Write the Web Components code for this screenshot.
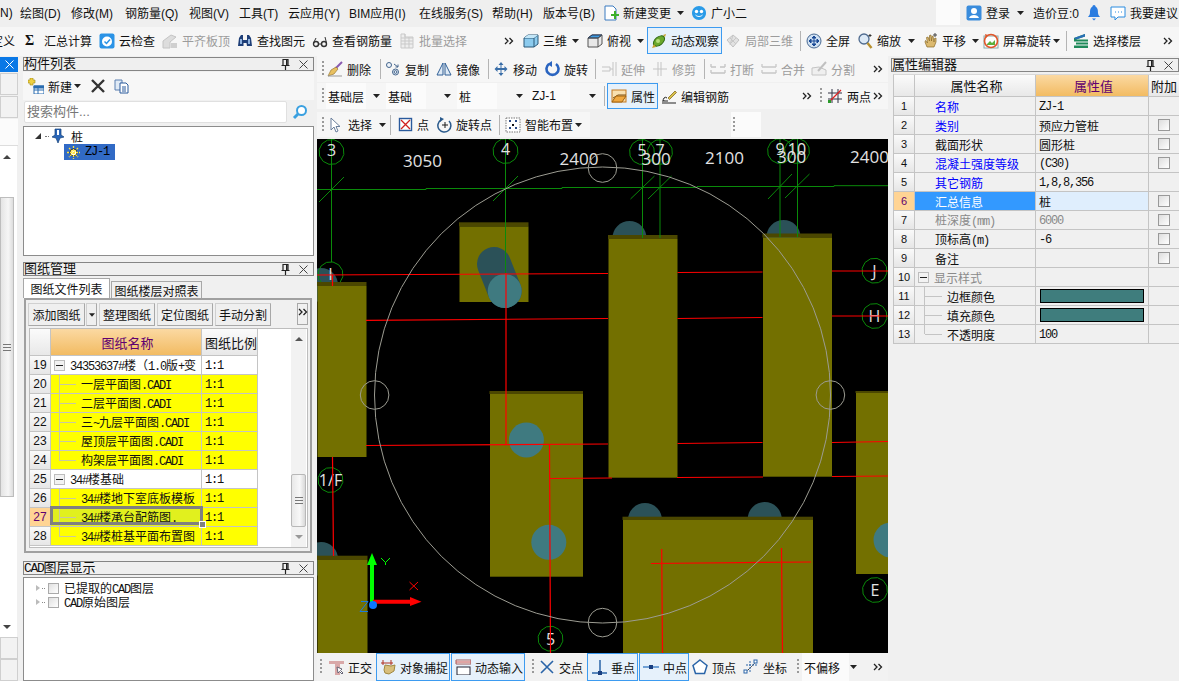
<!DOCTYPE html>
<html lang="zh"><head><meta charset="utf-8"><title>GTJ</title>
<style>
html,body{margin:0;padding:0;background:#f0f0f0;overflow:hidden}
body{font:12px "Liberation Sans","Noto Sans CJK SC",sans-serif;color:#111}
</style></head><body>
<gp-app>
  <menu-bar></menu-bar>
  <main-tools></main-tools>
  <side-strip></side-strip>
  <div id="left" slot="left">
    <dock-panel name="构件列表" style="height:199px"><component-list></component-list></dock-panel>
    <dock-panel name="图纸管理" style="height:290px;margin-top:6px"><drawing-manager></drawing-manager></dock-panel>
    <dock-panel name="CAD图层显示" style="height:120px;margin-top:9px"><cad-layers></cad-layers></dock-panel>
  </div>
  <center-col slot="center"></center-col>
  <dock-panel slot="right" name="属性编辑器" style="height:623px"><prop-editor></prop-editor></dock-panel>
</gp-app>
<script>
const I={
caret:[7,4,'<path d="M0 0h7L3.5 4z" fill="#222"/>'],
sep:[1,20,'<rect width="1" height="20" fill="#b4b4b4"/>'],
grip:[2,16,'<path d="M1 0v16" stroke="#9a9a9a" stroke-width="2" stroke-dasharray="2 2"/>'],
more:[10,8,'<path d="M1 1l3 3-3 3M5.5 1l3 3-3 3" fill="none" stroke="#222" stroke-width="1.3"/>'],
cloud:'<rect x=".5" y=".5" width="15" height="15" rx="2" fill="#2b93e6"/><circle cx="8" cy="8.5" r="5" fill="#fff"/><path d="M5.5 8.5l2 2 3.5-4" stroke="#2b93e6" stroke-width="1.5" fill="none"/>',
align:'<path d="M1 15V8l8-6 5 2-6 5v6z" fill="#ddd" stroke="#c4c4c4"/><path d="M9 10h6v5H9z" fill="#cfcfcf"/>',
find:'<path d="M2 5l2-3h2v5h4V2h2l2 3 1 8h-5l-.5-3h-3L6.500 13H1z" fill="#1f3f78"/><path d="M3 6h2v5H3zM11 6h2v5h-2z" fill="#8fb3e0"/>',
glasses:'<circle cx="4" cy="11" r="2.500" fill="none" stroke="#333" stroke-width="1.400"/><circle cx="12" cy="11" r="2.500" fill="none" stroke="#333" stroke-width="1.400"/><path d="M6.500 11h3M1.500 10L4 5M14.500 10L13 4" stroke="#333" fill="none"/>',
batch:'<path d="M2 1h4v3h8v11H2zM2 5h12M2 8h12M2 11h12M6 1v14M10 4v11" fill="#eee" stroke="#c9c9c9"/>',
cube:'<path d="M1 5l4-3h10v9l-4 3H1z" fill="#8ccbee" stroke="#2a5878"/><path d="M1 5h10v9M11 5l4-3" fill="none" stroke="#2a5878"/><path d="M1 5l4-3h10l-4 3z" fill="#c3e6f7"/>',
top:'<path d="M1 5l4-3h10v9l-4 3H1z" fill="#e8e8e8" stroke="#555"/><path d="M1 5l4-3h10l-4 3z" fill="#3f9be0" stroke="#235"/><path d="M1 5h10v9M11 5l4-3" fill="none" stroke="#555"/>',
orbit:'<ellipse cx="8" cy="8" rx="6.500" ry="4" transform="rotate(-40 8 8)" fill="#6aa82c" stroke="#2f6a12"/><path d="M12 2l3-1-1 3zM3 11l-2 4 4-1z" fill="#c9a12a"/><circle cx="7" cy="8" r="2" fill="#b5dc7a"/>',
local:'<path d="M2 7l6-5 6 5-6 7z" fill="#e2e2e2" stroke="#c2c2c2"/><path d="M5 5l6 6M8 2l-3 10M11 5L5 11" stroke="#c8c8c8" fill="none"/>',
full:'<circle cx="8" cy="8" r="7" fill="#cfe0f2" stroke="#4a6a92"/><path d="M8 3v10M3 8h10M8 3l-2 2h4zM8 13l-2-2h4zM3 8l2-2v4zM13 8l-2-2v4z" stroke="#1a4a96" fill="#1a4a96"/>',
zoom:'<circle cx="7" cy="6" r="5" fill="#dce9f6" stroke="#4f6b8f" stroke-width="1.300"/><path d="M10.500 10l4 5" stroke="#b7902e" stroke-width="2.400"/><path d="M13 1v3M11.500 2.500h3" stroke="#333"/>',
pan:'<path d="M3 9l2 5h7l2-5V5l-1.500.5L12 9 11 3l-1 .5L9.500 8 9 2 7.500 2.500 7.500 8 6 4l-1.500.5L5.500 10 3.500 7.500z" fill="#dcb96e" stroke="#8a6a26" stroke-width=".7"/><path d="M13 0v4M11 2h4" stroke="#444"/>',
rot:'<rect x="1" y="3" width="14" height="12" fill="#fff" stroke="#8aa"/><circle cx="8" cy="8" r="6.500" fill="none" stroke="#e0562a" stroke-width="1.600"/><path d="M4 11l3-3 2 2 3-3v5H4z" fill="#5cb03c"/><path d="M2 1l3 1-2 3z" fill="#e0562a"/>',
floors:'<path d="M1 5l11-4v2.500L3 6.500h12v2H1zM3 9.500h12v2H3zM1 12.500h14V15H1z" fill="#1f8a5a"/><path d="M1 5l11-4v2.500L3 6.500" fill="#2a6fb8"/>',
del:'<path d="M15 1L8 8" stroke="#8a5ab0" stroke-width="2"/><path d="M9 6l2 2-4 5-6 2 3-6z" fill="#e8c060" stroke="#8a6a26" stroke-width=".6"/><path d="M1 15h14" stroke="#999"/>',
copy:'<circle cx="4" cy="4" r="2.500" fill="#eef4fb" stroke="#44658c"/><circle cx="10.500" cy="11" r="3" fill="#eef4fb" stroke="#44658c"/><circle cx="10.500" cy="11" r="1.400" fill="none" stroke="#44658c"/><path d="M9 3l4 3M13 6V3.500M13 6h-2.500" stroke="#44658c" fill="none"/>',
mirror:'<path d="M7 2L1 14h6zM9 2l6 12H9z" fill="#dfeaf5" stroke="#2f5f96"/>',
move:'<path d="M8 1l2.500 3h-2v3h3V5l3 3-3 3V9h-3v3h2L8 15l-2.500-3h2V9h-3v2l-3-3 3-3v2h3V4h-2z" fill="#3a6ea8"/>',
rotate:'<path d="M5 3a6 6 0 1 0 7 0" fill="none" stroke="#2a64c0" stroke-width="2.600"/><path d="M8 0v6L3.500 3z" fill="#2a64c0"/>',
extend:'<path d="M1 6h8v4H1M12 1v14M15 1v14M9 8h3" fill="none" stroke="#c4c4c4"/>',
trim:'<path d="M1 8h14M6 1v14M9 1v14" fill="none" stroke="#c4c4c4"/>',
brk:'<path d="M1 6h5M10 6h5M1 12h14M1 6V3M15 6V3M1 12V9M15 12V9" fill="none" stroke="#c4c4c4" stroke-width="1.300"/>',
merge:'<path d="M1 6h14M1 12h14M1 6V3M15 6V3M1 12V9M15 12V9" fill="none" stroke="#c8c8c8" stroke-width="1.300"/>',
split:'<path d="M1 14V7l7-1 7 3v5z" fill="#efefef" stroke="#c4c4c4"/><path d="M15 1L7 10" stroke="#c0c0c0" stroke-width="2"/>',
attr:'<rect x="1" y="2" width="14" height="12" fill="#f8e0b0" stroke="#c47b22"/><path d="M2 10l5-3h8" fill="none" stroke="#7a5014"/><path d="M1 14l4-6h10l-4 6z" fill="#f0a840" stroke="#a0620f"/>',
rebar:'<path d="M1 13h6M3 13a2 2 0 1 1 3-3" fill="none" stroke="#222"/><path d="M7 10l7-7 1.500 1.500-7 7z" fill="#d8c24a" stroke="#7a5a14" stroke-width=".7"/><path d="M1 15h14" stroke="#222"/>',
two:'<path d="M1 5h14M1 11h14M5 1v14M11 1v14" stroke="#334" fill="none"/><path d="M2 14L14 2" stroke="#e02020" stroke-width="1.300"/><rect x="1" y="12" width="3" height="3" fill="#2a9a2a"/>',
cursor:'<path d="M3 1l0 12 3-3 2 5 2-1-2-4.500h4z" fill="#fff" stroke="#6a7f9c"/>',
point:'<rect x="1.500" y="1.500" width="12" height="12" fill="#fff" stroke="#2a5a9c" stroke-width="1.400"/><path d="M3 3l9 9M12 3l-9 9" stroke="#d02020" stroke-width="1.300"/>',
rpoint:'<path d="M13 4a6.500 6.500 0 1 1-8-1" fill="none" stroke="#2a5a8c" stroke-width="1.500"/><path d="M4 0l4 2-4 3z" fill="#2a5a8c"/><path d="M9 5v6M6 8h6" stroke="#1a1a1a"/>',
smart:'<rect x="1" y="1" width="14" height="14" fill="#fff" stroke="#777" stroke-dasharray="1.500 1"/><path d="M4 4h2M10 4h2M4 11h2M10 11h2M5 3v2M11 3v2M5 10v2M11 10v2" stroke="#1a3a7a" stroke-width="1.300"/><path d="M7 7h2v2H7z" fill="#111"/>',
ortho:'<path d="M1 2h15v3h-4v11H7V5H1z" fill="#d9a8a8"/><path d="M9 8l1 6 1.500-1.500L14 15l1-1-2.500-2.500L14 10z" fill="#fff" stroke="#667"/>',
snap:'<path d="M3 1v5M11 1v5M1 4h12" stroke="#b03020"/><path d="M4 11l1-5 6 1 4-1-1 6-5 3-4-1z" fill="#d8bf7c" stroke="#a08840"/>',
dyn:'<path d="M1 1h15v4H1z" fill="#fff" stroke="#a05a5a"/><path d="M1 3h15" stroke="#c04a4a"/><rect x="2" y="8" width="13" height="8" fill="#fff" stroke="#223"/>',
cross:'<path d="M2 2l12 12M14 2L2 14" stroke="#2a64a8" stroke-width="1.600"/>',
perp:'<path d="M1 14h15M9 1v13" stroke="#2a64a8" stroke-width="1.500"/><rect x="7" y="12" width="4" height="4" fill="#1a3f80"/>',
mid:'<path d="M0 8h16" stroke="#4a86c8" stroke-width="1.500"/><rect x="6" y="6" width="4" height="4" fill="#1a3f80"/>',
vertex:'<path d="M8 1l7 5.500-2.500 8h-9L1 6.500z" fill="#fff" stroke="#2a64a8" stroke-width="1.500"/>',
coord:'<path d="M3 13L13 3" stroke="#222" stroke-dasharray="2 1"/><path d="M3 6h11M7 2v12" stroke="#2a64a8" stroke-dasharray="2 1"/><rect x="1" y="11" width="3" height="3" fill="#fff" stroke="#2a64a8"/><rect x="11" y="1" width="3" height="3" fill="#fff" stroke="#2a64a8"/>',
change:'<path d="M2 1h8l3 3v11H2z" fill="#fff" stroke="#3a7ac0"/><path d="M8 9h3V6h2v3h3v2h-3v3h-2v-3H8z" fill="#3cb02c"/>',
robot:'<path d="M8 1c4 0 7 3 7 7s-3 7-7 7-7-3-7-7 3-7 7-7z" fill="#2a9be8"/><circle cx="5.500" cy="6.500" r="1.700" fill="#fff"/><circle cx="10.500" cy="6.500" r="1.700" fill="#fff"/><path d="M4.500 10c2 2 5 2 7 0" stroke="#fff" fill="none"/>',
user:'<rect x=".5" y=".5" width="15" height="15" rx="2" fill="#3a8cdc"/><circle cx="8" cy="6" r="3" fill="#fff"/><path d="M3 13c1-4 9-4 10 0z" fill="#fff"/>',
bell:'<path d="M8 0c1 0 1.500 1 1.500 1.500C12 3 12 6 12 8c0 2 1.500 3 2 4H2c.5-1 2-2 2-4 0-2 0-5 2.500-6.500C6.500 1 7 0 8 0z" fill="#2a7ce0"/><path d="M6 13.500h4L8 15.500z" fill="#2a7ce0"/>',
chat:'<path d="M1 2h14v10H8l-3 3v-3H1z" fill="#fff" stroke="#2a8ce0"/><path d="M5 7h1M8 7h1M11 7h1" stroke="#2a8ce0"/>',
pin:[9,11,'<path d="M2 .5h5v6H2zM.5 6.500h8M4.500 7v4" fill="none" stroke="#222" stroke-width="1.200"/><path d="M5 1h1.500v5H5z" fill="#222"/>'],
x:[9,9,'<path d="M.5.5l8 8M8.500.5l-8 8" stroke="#444" fill="none"/>'],
newc:'<path d="M2 0h3v2h2v3H5v2H2V5H0V2h2z" fill="#f0d040" stroke="#a08a18" stroke-width=".6"/><rect x="6" y="8" width="10" height="8" fill="#fff" stroke="#2a6cb0"/><path d="M6 8h10v2H6zM6 12h10M10 10v6" stroke="#2a6cb0" fill="#2a6cb0"/>',
bigx:'<path d="M2 2l12 12M14 2L2 14" stroke="#333" stroke-width="2.400"/>',
dup:'<path d="M1 2h7v10H1z" fill="#dfeaf6" stroke="#5a7fb0"/><path d="M6 5h6l2 2v8H6z" fill="#fff" stroke="#2a5a9c"/><path d="M8 9h4M8 11h4M8 13h4" stroke="#2a5a9c"/>',
mag:'<circle cx="9.500" cy="6.500" r="4.500" fill="#fff" stroke="#3aa0e0" stroke-width="2"/><path d="M6 10l-4 4" stroke="#3aa0e0" stroke-width="3"/>'
};
function svg(n){const v=I[n];if(!v)return'';const[a,b,c]=Array.isArray(v)?v:[16,16,v];return`<svg width="${a}" height="${b}" viewBox="0 0 ${a} ${b}" style="flex:none;display:block">${c}</svg>`}
const it=(x,e,ic,t='',f='')=>({x,e,ic,t,f});
function row(list,o){let p=o;return list.map(q=>{const s=`<tb-item ${q.ic?`icon="${q.ic}"`:''} ${q.f} style="margin-left:${q.x-p}px;width:${q.e-q.x}px">${q.t}</tb-item>`;p=q.e;return s}).join('')}
const mono=s=>'<span>'+s.replace(/[\x21-\x7e]+/g,m=>`<span class="m">${m}</span>`)+'</span>';
function def(name,html){customElements.define(name,class extends HTMLElement{constructor(){super();this.attachShadow({mode:'open'})}connectedCallback(){this.shadowRoot.innerHTML=typeof html==='function'?html(this):html}})}

def('tb-item',h=>`<style>:host{display:flex;align-items:center;gap:4px;box-sizing:border-box;white-space:nowrap;height:100%;flex:none}
:host([d]){color:#9c9c9c}
:host([a]){background:#e6f1fb;box-shadow:inset 0 0 0 1px #3d9bf0;padding-left:4px}
:host([s]){background:#fbfbfb;padding-left:2px}
</style>${svg(h.getAttribute('icon'))}<slot></slot>`);

def('tool-row',`<style>:host{display:flex;align-items:center;box-sizing:border-box;overflow:hidden}</style><slot></slot>`);

def('menu-bar',()=>`<style>:host{grid-column:1/-1;display:flex;height:27px;box-sizing:border-box;padding-bottom:2px;background:#efefef;align-items:center;overflow:hidden}</style>`+row([
it(0,9,'','N)'),it(20,62,'','绘图(D)'),it(71,116,'','修改(M)'),it(125,180,'','钢筋量(Q)'),it(189,231,'','视图(V)'),it(239,279,'','工具(T)'),it(288,340,'','云应用(Y)'),it(349,410,'','BIM应用(I)'),it(419,483,'','在线服务(S)'),it(492,535,'','帮助(H)'),it(543,598,'','版本号(B)'),
it(603,671,'change','新建变更'),it(677,684,'caret'),it(691,746,'robot','广小二'),it(936,960,'','','s'),it(966,1010,'user','登录'),it(1017,1024,'caret'),it(1033,1078,'','造价豆:0'),it(1086,1102,'bell'),it(1110,1178,'chat','我要建议')
],0));

def('main-tools',()=>`<style>:host{grid-column:1/-1;display:flex;height:29px;box-sizing:border-box;padding-bottom:2px;background:#f6f6f6;align-items:center;overflow:hidden}</style>`+row([
it(-9,15,'','定义'),it(25,38,'','<b style="font:bold 14px Liberation Serif">Σ</b>'),it(44,92,'','汇总计算'),it(99,155,'cloud','云检查'),it(162,230,'align','平齐板顶','d'),it(237,305,'find','查找图元'),it(312,392,'glasses','查看钢筋量'),it(399,467,'batch','批量选择','d'),it(504,514,'more'),
it(523,566,'cube','三维'),it(572,579,'caret'),it(587,631,'top','俯视'),it(637,644,'caret'),it(647,722,'orbit','动态观察','a'),it(725,793,'local','局部三维','d'),it(800,801,'sep'),it(806,850,'full','全屏'),it(857,901,'zoom','缩放'),it(908,915,'caret'),it(922,966,'pan','平移'),it(972,979,'caret'),it(983,1051,'rot','屏幕旋转'),it(1053,1060,'caret'),it(1066,1067,'sep'),it(1073,1141,'floors','选择楼层'),it(1163,1173,'more')
],0));

def('side-strip',`<style>:host{display:flex;flex-direction:column;height:624px;margin-top:1px;width:18px;background:#f0f0f0}
.h{height:15px;background:#0a78e6;display:flex;align-items:center;justify-content:flex-end;padding-right:4px;flex:none}
.h svg path{stroke:#fff}
.b{flex:none;box-sizing:border-box;height:22px;border:1px solid #cfcfcf;background:#f2f2f2;width:18px;margin-top:1px}
.w{flex:none;height:26px;background:#fbfbfb;margin-top:1px;border-bottom:1px solid #ddd}
.s{flex:1;display:flex;flex-direction:column;align-items:center;width:14px;background:#fff;border-right:3px solid #fff}
.ar{flex:none;height:22px;display:flex;align-items:center;justify-content:center;width:14px}
.t{margin-top:29px;height:300px;width:14px;flex:none;box-sizing:border-box;border:1px solid #bdbdbd;background:linear-gradient(90deg,#e4e4e4,#f6f6f6 60%,#ddd);display:flex;align-items:center;justify-content:center}
</style><div class="h">${svg('x')}</div><div class="b"></div><div class="b"></div><div class="w"></div>
<div class="s"><div class="ar"><svg width="8" height="4"><path d="M0 4h8L4 0z" fill="#444"/></svg></div>
<div class="t"><svg width="8" height="7"><path d="M0 .5h8M0 3.500h8M0 6.500h8" stroke="#777"/></svg></div>
<div class="ar" style="margin-top:auto;height:20px"><svg width="8" height="4"><path d="M0 0h8L4 4z" fill="#444"/></svg></div></div>
<div class="b" style="margin-top:0"></div><div class="b" style="margin-top:0"></div>`);

def('dock-panel',h=>`<style>:host{display:flex;flex-direction:column;box-sizing:border-box}
.h{flex:none;height:14px;box-sizing:border-box;border:1px solid #858585;background:#efefef;display:flex;align-items:center;font-size:13px;white-space:nowrap;line-height:12px;padding-right:5px}
.h>span{flex:1}
.m{font:13px "Liberation Mono",monospace;letter-spacing:-1.3px}
.h svg{margin-left:9px}
.c{flex:1;min-height:0;display:flex;flex-direction:column;margin-top:1px}
</style><div class="h">${mono(h.getAttribute('name'))}${svg('pin')}${svg('x')}</div><div class="c"><slot></slot></div>`);

def('component-list',`<style>:host{display:flex;flex-direction:column;flex:1;min-height:0}
.t{height:28px;flex:none;display:flex;align-items:center;background:#f7f7f7;padding-left:5px}
.sr{height:24px;flex:none;display:flex;align-items:center;background:#f0f0f0}
.i{margin-left:1px;width:263px;height:22px;background:#fff;border:1px solid #e0e0e0;box-sizing:border-box;color:#777;font-size:13px;padding-left:2px;line-height:20px;border-radius:2px}
.tree{flex:1;background:#fff;border:1px solid #8c8c8c;box-sizing:border-box;margin-top:2px;padding:1px 0 0 10px}
.r{display:flex;align-items:center;height:16px}
.sel{margin-left:30px;width:51px;height:16px;background:#316ac5;display:flex;align-items:center;gap:5px;padding-left:3px;box-sizing:border-box;font:12px "Liberation Mono";letter-spacing:-1.2px;color:#000}
</style>
<div class="t">${svg('newc')}<span style="margin-left:4px;font-size:12px">新建</span><span style="margin:0 0 0 2px">${svg('caret')}</span><span style="margin-left:9px">${svg('bigx')}</span><span style="margin-left:8px">${svg('dup')}</span></div>
<div class="sr"><div class="i">搜索构件...</div><span style="margin-left:5px">${svg('mag')}</span></div>
<div class="tree"><div class="r"><svg width="8" height="6" style="margin-left:1px"><path d="M0 6l6-6v6z" fill="#333"/></svg><span style="width:4px;border-top:1px dotted #777;margin:0 2px"></span><svg width="14" height="16" viewBox="0 0 14 16"><path d="M4 1h6v6l3 2-4 1-2 5-2-5-4-1 3-2z" fill="#2a66b8" stroke="#13407a" stroke-width=".7"/><path d="M6 2h2v5H6z" fill="#fff"/></svg><span style="margin-left:6px">桩</span></div>
<div class="r"><div class="sel"><svg width="13" height="13" viewBox="0 0 13 13"><circle cx="6.500" cy="6.500" r="3.500" fill="#fff" stroke="#222"/><path d="M6.500 0v13M0 6.500h13M2 2l9 9M11 2l-9 9" stroke="#ffe23a" stroke-width="1.300" stroke-dasharray="2 1"/></svg>ZJ-1</div></div></div>`);

const MINUS='<svg width="11" height="11" style="flex:none"><rect x=".5" y=".5" width="10" height="10" fill="#f2f2f2" stroke="#bdbdbd"/><path d="M2 5.500h7" stroke="#222"/></svg>';
const gridCss=`
.g{display:grid;font-size:12px;white-space:nowrap;position:relative}
.g>div{box-sizing:border-box;border-right:1px solid #c4c4c4;border-bottom:1px solid #c4c4c4;display:flex;align-items:center;overflow:hidden;height:19px;padding-left:3px}
.g>.n{background:linear-gradient(#fafafa,#e6e6e6);justify-content:center;padding:0}
.g>.hd{height:27px;justify-content:center;background:linear-gradient(#fbfbfb,#e8e8e8);font-size:13px}
.g>.or{background:linear-gradient(#fbd9a2,#f2bb62);color:#600070;font-size:13px}
.m{font:12px "Liberation Mono",monospace;letter-spacing:-1.2px}
`;
const dw=[[19,'34353637#楼（1.0版+变',1],[20,'一层平面图.CADI'],[21,'二层平面图.CADI'],[22,'三~九层平面图.CADI'],[23,'屋顶层平面图.CADI'],[24,'构架层平面图.CADI',2],[25,'34#楼基础',1],[26,'34#楼地下室底板模板'],[27,'34#楼承台配筋图.',3],[28,'34#楼桩基平面布置图',2]];
def('drawing-manager',()=>`<style>:host{display:flex;flex-direction:column;flex:1;min-height:0}${gridCss}
.tabs{display:flex;height:21px;align-items:flex-end;flex:none;font-size:12px}
.tab{box-sizing:border-box;border:1px solid #a8a8a8;border-bottom:0;background:#f0f0f0;height:17px;display:flex;align-items:center;justify-content:center;margin-left:1px;width:91px}
.tab.on{background:#fff;height:20px;width:87px;margin-left:0}
.body{flex:1;border:2px solid #a0a0a0;background:#f0f0f0;box-sizing:border-box;margin:0 2px 0 1px;padding:3px 2px;display:flex;flex-direction:column}
.bar{display:flex;height:23px;flex:none;gap:2px}
.bt{box-sizing:border-box;border:1px solid #a8a8a8;border-top-color:#d0d0d0;border-left-color:#d0d0d0;background:#efefef;height:23px;width:56px;display:flex;align-items:center;justify-content:center}
.mr{margin-left:auto;width:11px;height:22px;box-sizing:border-box;border:1px solid #a8a8a8;display:flex;justify-content:center;padding-top:4px}
.wrap{display:flex;background:#fff;border:1px solid #bdbdbd;margin-top:2px;flex:1;min-height:0;margin-left:1px}
.g{grid-template-columns:21px 151px 56px;align-content:start;height:218px}
.y{background:#ff0;background-image:linear-gradient(#c8c8a0,#c8c8a0);background-repeat:no-repeat;background-position:8px 0;background-size:1px 100%;padding-left:8px!important}
.y.e{background-size:1px 50%}
.w{background:#fff}
.ln{width:17px;height:1px;background:#c8c8a0;flex:none;margin-right:5px}
.sel{background-color:#e1f01e;}
.fr{box-sizing:border-box;position:absolute;left:20px;top:177px;width:153px;height:21px;border:3px solid #808080!important;pointer-events:none;background:transparent;overflow:visible!important;padding:0!important}
.fr i{position:absolute;right:-6px;bottom:-6px;width:5px;height:5px;background:#808080;border:1px solid #fff}
.sb{margin-left:33px;width:15px;display:flex;flex-direction:column;align-items:center;background:#f2f2f2;flex:none}
.th{margin-top:133px;width:15px;height:53px;box-sizing:border-box;border:1px solid #b8b8b8;background:linear-gradient(90deg,#e8e8e8,#f8f8f8 60%,#d8d8d8);display:flex;align-items:center;justify-content:center;border-radius:2px}
</style>
<div class="tabs"><div class="tab on">图纸文件列表</div><div class="tab">图纸楼层对照表</div></div>
<div class="body"><div class="bar"><div class="bt" style="width:57px">添加图纸</div><div class="bt" style="width:11px;margin-left:-1px">${svg('caret').replace('width="7"','width="6"')}</div><div class="bt">整理图纸</div><div class="bt">定位图纸</div><div class="bt">手动分割</div><div class="mr">${svg('more')}</div></div>
<div class="wrap"><div class="g"><div class="n hd"></div><div class="hd or">图纸名称</div><div class="hd">图纸比例</div>
${dw.map(([n,t,k])=>{const sel=k===3;const parent=k===1;const end=k===2;
return `<div class="n"${sel?' style="background:#ffd494;color:#600070"':''}>${n}</div><div class="${parent?'w':'y'+(end?' e':'')+(sel?' sel':'')}">${parent?MINUS+'<span style="margin-left:5px">'+mono(t)+'</span>':'<span class="ln"></span>'+mono(t)}</div><div class="${parent?'w':''}" style="${parent?'':'background:#ff0;'}">${mono('1:1')}</div>`}).join('')}
<div class="fr"><i></i></div></div>
<div class="sb"><svg width="8" height="4" style="margin-top:8px"><path d="M0 4h8L4 0z" fill="#555"/></svg><div class="th"><svg width="8" height="7"><path d="M0 .5h8M0 3.500h8M0 6.500h8" stroke="#777"/></svg></div><svg width="8" height="4" style="margin-top:8px"><path d="M0 0h8L4 4z" fill="#999"/></svg></div>
</div></div>`);

def('cad-layers',`<style>:host{flex:1;background:#fff;border:1px solid #8c8c8c;display:block;box-sizing:border-box;margin-top:1px;padding:3px 0 0 12px;font-size:12px}
.r{display:flex;align-items:center;height:14px;gap:2px}
.cb{width:11px;height:11px;border:1px solid #aaa;background:linear-gradient(135deg,#e0e0e0,#fff);box-sizing:border-box;margin:0 3px 0 1px}
.tr{width:0;height:0;border-left:4px solid #bbb;border-top:3px solid transparent;border-bottom:3px solid transparent}
.d{width:3px;border-top:1px dotted #888}
.m{font:12px "Liberation Mono";letter-spacing:-1.2px}
</style><div class="r"><i class="tr"></i><i class="d"></i><i class="cb"></i><span>已提取的<span class="m">CAD</span>图层</span></div>
<div class="r"><i class="tr"></i><i class="d"></i><i class="cb"></i><span><span class="m">CAD</span>原始图层</span></div>`);

const pr=[[1,'名称','ZJ-1','b',0],[2,'类别','预应力管桩','b',1],[3,'截面形状','圆形桩','',1],[4,'混凝土强度等级','(C30)','b',1],[5,'其它钢筋','1,8,8,356','b',0],[6,'汇总信息','桩','s',1],[7,'桩深度(mm)','6000','g',1],[8,'顶标高(m)','-6','',1],[9,'备注','','',1],[10,'显示样式','','p',0],[11,'边框颜色','#','c',0],[12,'填充颜色','#','c',0],[13,'不透明度','100','ce',0]];
def('prop-editor',()=>`<style>:host{display:block;flex:1;margin:1px 0 0 2px}${gridCss}
.g{grid-template-columns:21px 121px 113px 31px;border-left:1px solid #c4c4c4;border-top:1px solid #d8d8d8}
.g>.hd{height:22px}
.g>.n{font-size:11px}
.cbx{width:12px;height:12px;border:1px solid #999;background:linear-gradient(135deg,#ddd,#fff);box-sizing:border-box;margin:auto}
.nm{padding-left:20px!important}
.sw{width:104px;height:14px;background:#3f7d7d;border:1px solid #000;box-sizing:border-box;margin-left:1px}
.tr{padding-left:4px!important;background:linear-gradient(#c4c4c4,#c4c4c4) 9px 0/1px 100% no-repeat}
.tr.e{background-size:1px 50%}
.tr i{width:17px;height:1px;background:#c4c4c4;margin:0 5px 0 6px;flex:none}
</style><div class="g"><div class="n hd"></div><div class="hd">属性名称</div><div class="hd or">属性值</div><div class="hd" style="padding:0">附加</div>
${pr.map(([n,a,v,k,c])=>{const col=k==='b'?'color:#0000ff;':k==='s'?'background:#3399ff;color:#fff;':k==='g'||k==='p'?'color:#8a8a8a;':'';
const nameCell=k==='p'?`<div style="padding-left:3px;${col}">${MINUS}<span style="margin-left:5px">${a}</span></div>`:k==='c'||k==='ce'?`<div class="tr${k==='ce'?' e':''}"><i></i>${a}</div>`:`<div class="nm" style="${col}">${mono(a)}</div>`;
const val=k==='c'?'<div style="padding-left:3px"><span class="sw"></span></div>':`<div style="${k==='s'?'background:#dfeefd;':''}${k==='g'?'color:#8a8a8a;':''}">${mono(v)}</div>`;
return `<div class="n"${k==='s'?' style="background:#ffd494;color:#600070"':''}>${n}</div>${nameCell}${val}<div style="padding:0">${c?'<span class="cbx"></span>':''}</div>`}).join('')}</div>`);

function ngon(cx,cy,r=12.5){let p=[];for(let i=0;i<12;i++){const a=i*Math.PI/6+.2;p.push((cx+r*Math.cos(a)).toFixed(1)+','+(cy+r*Math.sin(a)).toFixed(1))}return`<polygon points="${p.join(' ')}" fill="none" stroke="#0a8a0a"/>`}
function block(x1,x2,y1,y2,y3){return`<rect x="${x1}" y="${y1}" width="${x2-x1}" height="${y2-y1}" fill="#4b4700"/><rect x="${x1+.5}" y="${y2}" width="${x2-x1-.5}" height="${y3-y2}" fill="#737000"/>`}
const peek=(x,y)=>`<circle cx="${x}" cy="${y+17}" r="17" fill="#2b5158"/>`;
function canvas(){
const lab=[['3050',403,167],['2400',559.500,165],['300',641.500,165],['2100',705,164],['300',777,163],['2400',850,163]];
const gc=[[331.500,150,'3'],[505.500,149,'4'],[642,150,'5'],[660,150,'7'],[780,149,'9'],[797,149,'10'],[874.500,270.700,'J'],[874.500,316,'H'],[875,590,'E'],[330.500,480,'1/F'],[330.500,274.300,'I'],[550.500,638.700,'5']];
return `<svg xmlns="http://www.w3.org/2000/svg" width="571" height="514" viewBox="317 139 571 514" style="display:block;background:#000">
${peek(321,268)}${peek(629.500,221)}${peek(783.500,220)}${peek(645,503)}${peek(764.700,502)}${peek(321,542)}
${block(459,528.500,222.300,226.500,302)}${block(608,677.500,235,239,477.700)}${block(762.500,832,233.500,237.500,476.700)}${block(489.500,583,391,394,576.700)}${block(317,367.500,555.700,560,653)}${block(622.500,813,516.700,520,653)}${block(855.500,888,391,393,574)}
<path d="M494 264L504.700 291" stroke="#2b5158" stroke-width="34" stroke-linecap="round"/>
<circle cx="504.700" cy="291" r="17" fill="#3f7a80"/><circle cx="526.400" cy="440" r="17.500" fill="#3f7a80"/><circle cx="548.800" cy="542.300" r="17.500" fill="#3f7a80"/><circle cx="891" cy="540" r="17.500" fill="#3f7a80"/>
<g stroke="#0a8a0a" fill="none">
<path d="M317 189.500H426V188.500H562V187.500H697V186.500H834V185.700H888"/>
<path d="M331.500 139V262M505.500 139V273M642.500 139V238M660 139V238M780 139V237M797.500 139V237"/>
<path d="M319 202L344 177M493 201L518 176M630.500 199L654.500 176M648 199L671.500 176M768 199L792 174M785 198L809.500 174"/>
</g>
${gc.map(c=>ngon(c[0],c[1]+(c[1]<160?2:0))).join('')}
<g font-family="Open Sans" fill="#e2e2e2" font-size="17">
${lab.map(l=>`<text x="${l[1]}" y="${l[2]}">${l[0]}</text>`).join('')}
${gc.map(c=>`<text x="${c[0]}" y="${c[1]+6}" text-anchor="middle" font-size="16">${c[2]}</text>`).join('')}
</g>
${block(317,366.500,282,286,457)}
<g stroke="#ff0000" fill="none" stroke-width="1.200">
<path d="M317 275L608 273.500M677.500 272.500L762.500 272M832 271H888M366 320.300L608 318.500M677.500 318.500L762.500 317.500M832 316H888M366 445.500L608 444M677.500 443.500L762.500 442.500M832 442.500L888 441.500M550 478.500L612 478M677 477.500L763 477M832 476.500L888 476"/>
<path d="M506 273V444M549.500 444L550.500 653M332.500 275V286M332.500 457L333.500 556M661.700 549L662.500 653M781.500 548L782.500 653M651 563.500L811 562"/>
</g>
<g fill="none" stroke="#9c9c92" stroke-width="1"><circle cx="602.500" cy="395" r="228"/><circle cx="374.600" cy="395" r="14.300"/><circle cx="830.400" cy="395" r="14.300"/><circle cx="602.500" cy="168" r="14.300"/><circle cx="602.500" cy="622.600" r="14.300"/></g>
<path d="M372 602V562" stroke="#00ff00" stroke-width="4"/><path d="M372 553L377 565H367z" fill="#00ff00"/>
<path d="M373 601.700H411" stroke="#ff0000" stroke-width="4"/><path d="M421.500 601.700L410 597V606z" fill="#ff0000"/>
<circle cx="373" cy="605" r="4" fill="#0a78ff"/>
<path d="M381 558L385.500 562.500M390 558L385.500 562.500V565" stroke="#00ff00" fill="none"/>
<path d="M409.500 582L418 590M418 582L409.500 590" stroke="#ff0000" fill="none"/>
<path d="M361 601.500H368L360 611.500H368" stroke="#1a7ae0" fill="none"/>
</svg>`}

def('center-col',()=>`<style>:host{display:flex;flex-direction:column;height:625px}
tool-row{flex:none}
.r{background:#f6f6f6}
</style>
<tool-row class="r" style="height:26px">${row([it(322,324,'grip'),it(327,372,'del','删除'),it(380,381,'sep'),it(385,428,'copy','复制'),it(436,480,'mirror','镜像'),it(488,489,'sep'),it(493,537,'move','移动'),it(544,588,'rotate','旋转'),it(595,596,'sep'),it(601,645,'extend','延伸','d'),it(652,696,'trim','修剪','d'),it(704,705,'sep'),it(710,754,'brk','打断','d'),it(761,805,'merge','合并','d'),it(811,856,'split','分割','d'),it(873,883,'more')],317)}</tool-row>
<tool-row class="r" style="height:26px;margin-top:1px">${row([it(322,324,'grip'),it(326,366,'','基础层','s'),it(373,380,'caret'),it(386,426,'','基础','s'),it(444,451,'caret'),it(457,497,'','桩','s'),it(516,523,'caret'),it(530,570,'','ZJ-1','s'),it(589,596,'caret'),it(604,605,'sep'),it(607,658,'attr','属性','a'),it(661,729,'rebar','编辑钢筋'),it(802,812,'more'),it(820,822,'grip'),it(827,871,'two','两点'),it(873,883,'more')],317)}</tool-row>
<tool-row class="r" style="height:25px;margin:3px 0 2px;background:linear-gradient(90deg,#f6f6f6 273px,#f0f0f0 273px)">${row([it(322,324,'grip'),it(328,344,'cursor'),it(348,372,'','选择'),it(379,386,'caret'),it(390,391,'sep'),it(398,414,'point'),it(417,430,'','点'),it(436,492,'rpoint','旋转点'),it(499,500,'sep'),it(505,572,'smart','智能布置'),it(575,582,'caret'),it(731,761,'grip','','s')],317)}</tool-row>
<cad-canvas></cad-canvas>
<tool-row class="r" style="height:28px;background:#f2f2f2">${row([it(320,322,'grip'),it(328,372,'ortho','正交'),it(376,450,'snap','对象捕捉','a'),it(451,525,'dyn','动态输入','a'),it(532,534,'grip'),it(539,583,'cross','交点'),it(587,638,'perp','垂点','a'),it(639,689,'mid','中点','a'),it(692,736,'vertex','顶点'),it(743,787,'coord','坐标'),it(797,799,'grip'),it(802,849,'','不偏移','s'),it(850,857,'caret'),it(873,883,'more')],317)}</tool-row>`);
def('cad-canvas',()=>`<style>:host{display:block;height:514px;flex:none}</style>${canvas()}`);

def('gp-app',`<style>:host{display:grid;width:1179px;height:681px;grid-template-columns:23px 294px 574px 288px;grid-template-rows:27px 29px 625px;background:#f0f0f0;overflow:hidden}
.l{grid-column:2;width:291px;padding-top:1px;box-sizing:border-box}
.c{grid-column:3;width:571px}
.r{grid-column:4;width:288px;padding-top:2px}
</style><slot></slot><div class="l"><slot name="left"></slot></div><div class="c"><slot name="center"></slot></div><div class="r"><slot name="right"></slot></div>`);
</script>
</body></html>
